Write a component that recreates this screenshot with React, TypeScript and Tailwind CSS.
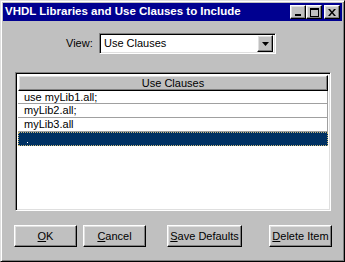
import React from "react";

const raised =
  "border border-t-white border-l-white border-r-black border-b-black shadow-[inset_-1px_-1px_0_#808080,inset_1px_1px_0_#dfdfdf]";
const sunken =
  "border border-t-[#808080] border-l-[#808080] border-r-white border-b-white shadow-[inset_1px_1px_0_#000000,inset_-1px_-1px_0_#dfdfdf]";

function TitleBtn({ children, className = "" }: { children: React.ReactNode; className?: string }) {
  return (
    <div className={`w-[16px] h-[14px] bg-[#c0c0c0] flex items-center justify-center ${raised} ${className}`}>
      {children}
    </div>
  );
}

function Btn({ w, children, className = "" }: { w: string; children: React.ReactNode; className?: string }) {
  return (
    <div className={`${w} h-[22px] bg-[#c0c0c0] flex items-center justify-center text-[11px] text-black ${raised} ${className}`}>
      {children}
    </div>
  );
}

export default function App() {
  return (
    <div className="w-[345px] h-[262px] bg-[#c0c0c0] font-['Liberation_Sans',Arial,sans-serif] text-black">
      <div className="w-full h-full border border-t-[#dfdfdf] border-l-[#dfdfdf] border-r-black border-b-black shadow-[inset_1px_1px_0_#ffffff,inset_-1px_-1px_0_#808080] p-[2px] flex flex-col">
        {/* Title bar */}
        <div className="h-[18px] bg-[#000090] flex items-center pl-[2px] pr-[2px]">
          <span className="text-white font-bold text-[11.5px] leading-none flex-1 whitespace-nowrap">
            VHDL Libraries and Use Clauses to Include
          </span>
          <TitleBtn>
            <div className="w-[6px] h-[2px] bg-black mt-[6px] -ml-[1px]" />
          </TitleBtn>
          <TitleBtn>
            <div className="w-[9px] h-[9px] border border-black border-t-2" />
          </TitleBtn>
          <TitleBtn className="ml-[2px]">
            <svg width="8" height="7" viewBox="0 0 8 7">
              <path d="M0 0h2l2 2.5L6 0h2L5 3.5 8 7H6L4 4.5 2 7H0l3-3.5z" fill="#000" />
            </svg>
          </TitleBtn>
        </div>

        {/* View row */}
        <div className="mt-[12px] h-[21px] flex items-center pl-[63px]">
          <span className="text-[11px] w-[26px]">View:</span>
          <div className={`ml-[7px] w-[177px] h-[21px] bg-white flex items-center p-[2px] ${sunken}`}>
            <span className="flex-1 text-[11px] pl-[2px]">Use Clauses</span>
            <div className={`w-[16px] h-[17px] bg-[#c0c0c0] flex items-center justify-center ${raised}`}>
              <svg width="7" height="4" viewBox="0 0 7 4">
                <path d="M0 0h7L3.5 4z" fill="#000" />
              </svg>
            </div>
          </div>
        </div>

        {/* List box */}
        <div className={`mt-[18px] ml-[12px] w-[316px] h-[139px] bg-white p-[2px] ${sunken}`}>
          <div className="flex flex-col w-full">
            <div className={`h-[16px] bg-[#c0c0c0] flex items-center justify-center text-[11px] ${raised}`}>
              Use Clauses
            </div>
            <div className="h-[13px] border-b border-r border-[#a0a0a0] flex items-center pl-[6px] text-[11px] leading-none">
              use myLib1.all;
            </div>
            <div className="h-[14px] border-b border-r border-[#a0a0a0] flex items-center pl-[6px] text-[11px] leading-none">
              myLib2.all;
            </div>
            <div className="h-[14px] border-b border-r border-[#a0a0a0] flex items-center pl-[6px] text-[11px] leading-none">
              myLib3.all
            </div>
            <div className="h-[14px] bg-[#003163] border border-dotted border-[#c8b87a] relative">
              <div className="absolute left-[8px] bottom-[2px] w-[1px] h-[1px] bg-white" />
            </div>
          </div>
        </div>

        {/* Buttons */}
        <div className="mt-[14px] ml-[11px] flex items-center">
          <Btn w="w-[63px]">
            <span><u>O</u>K</span>
          </Btn>
          <Btn w="w-[63px]" className="ml-[6px]">
            <span><u>C</u>ancel</span>
          </Btn>
          <Btn w="w-[75px]" className="ml-[21px]">
            <span><u>S</u>ave Defaults</span>
          </Btn>
          <Btn w="w-[63px]" className="ml-[27px]">
            <span><u>D</u>elete Item</span>
          </Btn>
        </div>
      </div>
    </div>
  );
}
